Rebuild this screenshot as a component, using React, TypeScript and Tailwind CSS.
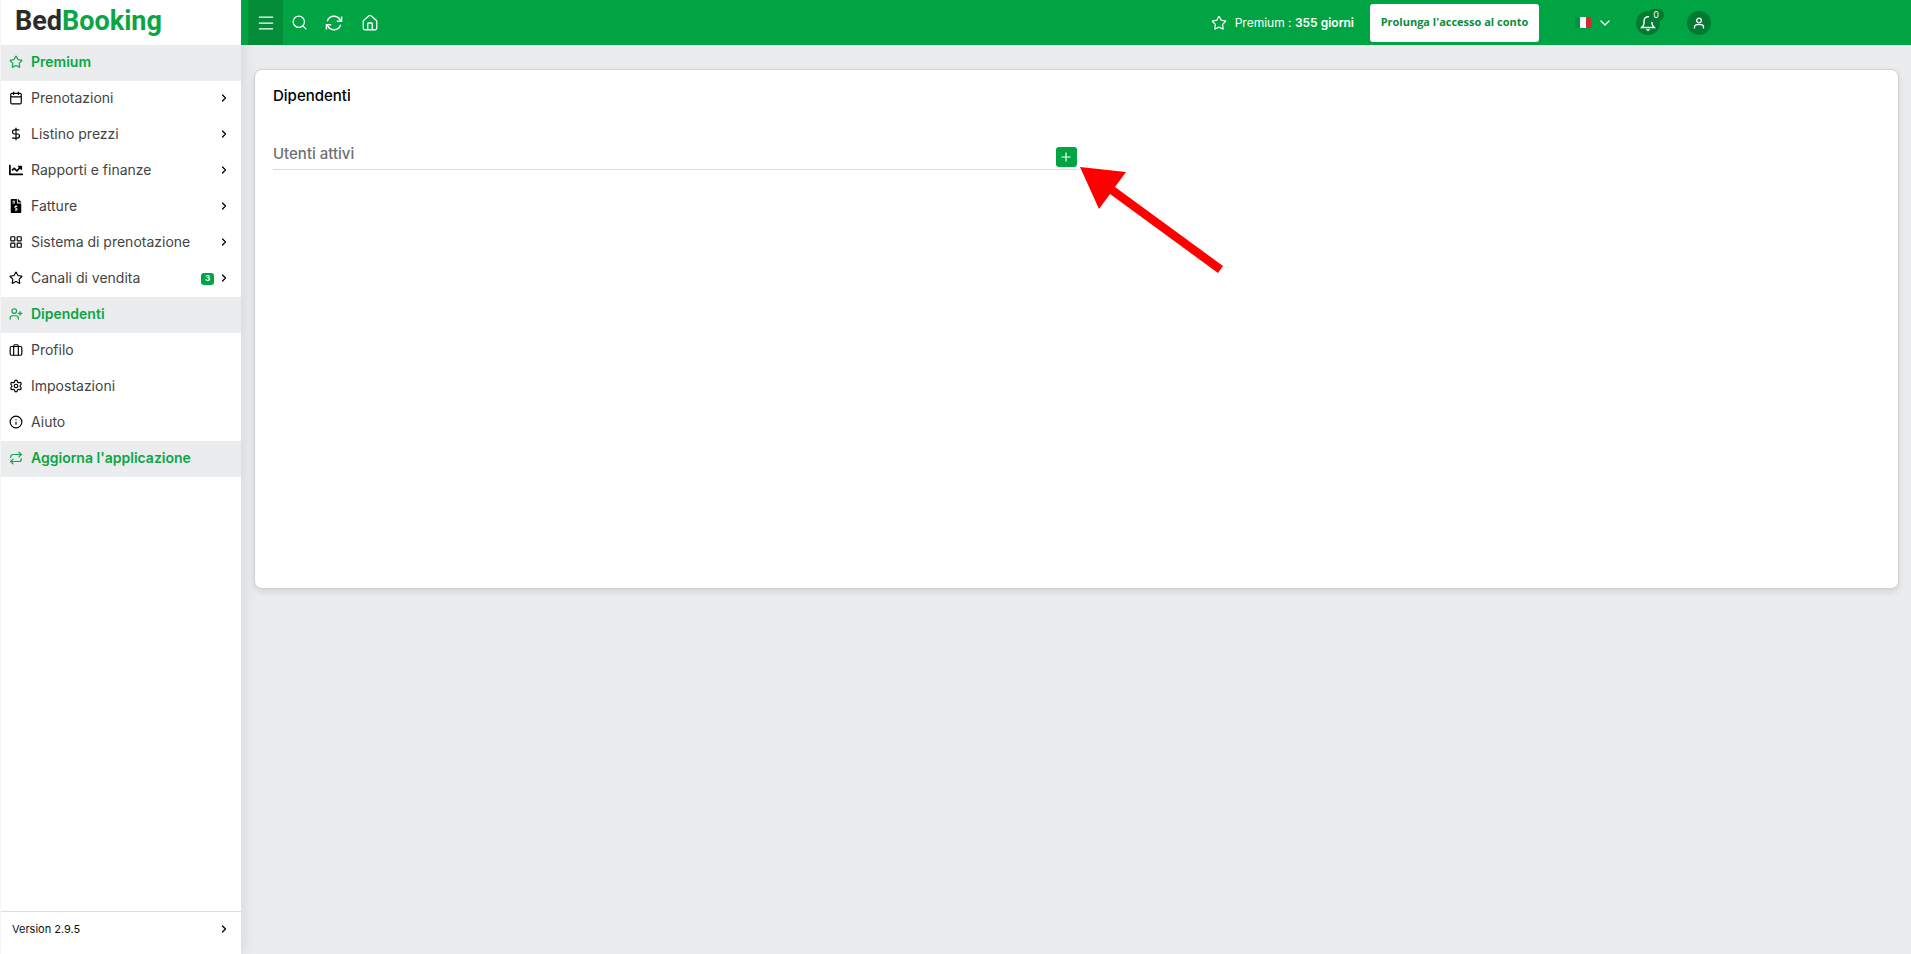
import type { ReactNode } from "react";
import {
  Calendar,
  ChevronDown,
  ChevronRight,
  DollarSign,
  House,
  Info,
  LayoutGrid,
  Menu,
  Plus,
  Repeat,
  Search,
  Settings,
  Star,
  UserPlus,
} from "lucide-react";
import { FaChartLine, FaFileInvoiceDollar } from "react-icons/fa";

type Item = { label: string; icon: ReactNode; active?: boolean; arrow?: boolean; badge?: string };

function Suitcase() {
  return (
    <svg viewBox="0 0 24 24" className="size-3.5" fill="none" stroke="currentColor" strokeWidth="2">
      <rect x="2" y="6" width="20" height="15" rx="2.5" />
      <path d="M8 21V5a2 2 0 0 1 2-2h4a2 2 0 0 1 2 2v16" />
    </svg>
  );
}

function Refresh() {
  return (
    <svg viewBox="0 0 18 16" className="h-4 w-[18px]" fill="none" stroke="currentColor" strokeWidth="1.4">
      <path d="M2.3 6.2A7 7 0 0 1 15 4.6L16.4 6" />
      <path d="M16.6 1.4v4.8h-4.8" />
      <path d="M15.7 9.8A7 7 0 0 1 3 11.4L1.6 10" />
      <path d="M1.4 14.6V9.8h4.8" />
    </svg>
  );
}

function BellIcon() {
  return (
    <svg viewBox="0 0 16 18" className="h-[18px] w-4" fill="none" stroke="currentColor" strokeWidth="1.4">
      <path d="M9 2.8C5.800 2.200 4 4.400 4 7v2.600c0 1.600-1 2.300-2.400 3.900h12.800c-1.400-1.600-2.400-2.300-2.400-3.900V8" />
      <path d="M6.200 15.500h3.600L8 17z" fill="currentColor" strokeWidth="0.500" />
    </svg>
  );
}

function UserIcon() {
  return (
    <svg viewBox="0 0 12 12" className="size-3" fill="none" stroke="currentColor" strokeWidth="1.300">
      <circle cx="6" cy="3.500" r="2.300" />
      <path d="M1.500 11.500V10a2.300 2.300 0 0 1 2.300-2.300h4.400a2.300 2.300 0 0 1 2.300 2.300v1.500" />
    </svg>
  );
}

const items: Item[] = [
  { label: "Premium", icon: <Star className="size-3.5" />, active: true },
  { label: "Prenotazioni", icon: <Calendar className="size-3.5" />, arrow: true },
  { label: "Listino prezzi", icon: <DollarSign className="size-3.5" />, arrow: true },
  { label: "Rapporti e finanze", icon: <FaChartLine className="size-3.5" />, arrow: true },
  { label: "Fatture", icon: <FaFileInvoiceDollar className="size-3.5" />, arrow: true },
  { label: "Sistema di prenotazione", icon: <LayoutGrid className="size-3.5" />, arrow: true },
  { label: "Canali di vendita", icon: <Star className="size-3.5" />, arrow: true, badge: "3" },
  { label: "Dipendenti", icon: <UserPlus className="size-3.5" />, active: true },
  { label: "Profilo", icon: <Suitcase /> },
  { label: "Impostazioni", icon: <Settings className="size-3.5" /> },
  { label: "Aiuto", icon: <Info className="size-3.5" /> },
  { label: "Aggiorna l'applicazione", icon: <Repeat className="size-3.5" />, active: true },
];

function SidebarItem({ item }: { item: Item }) {
  return (
    <li>
      <a
        href="#"
        className={
          item.active
            ? "flex h-9 items-center gap-2 bg-[#ebecee] pr-[11px] pb-0.5 pl-2 font-semibold text-[#0aa645]"
            : "flex h-9 items-center gap-2 pr-[11px] pb-0.5 pl-2 text-[#444]"
        }
      >
        <span className={item.active ? "shrink-0" : "shrink-0 text-black"}>{item.icon}</span>
        <span className="flex-1 whitespace-nowrap">{item.label}</span>
        <span className="flex items-center gap-1">
          {item.badge && (
            <span className="mt-0.5 flex h-3 w-[13px] items-center justify-center rounded-[3px] bg-[#00a443] text-[8px] font-bold text-white">
              {item.badge}
            </span>
          )}
          {item.arrow && <ChevronRight className="size-3 text-black" strokeWidth={2.5} />}
        </span>
      </a>
    </li>
  );
}

function Sidebar() {
  return (
    <aside className="z-10 flex w-[241px] shrink-0 flex-col border-l border-[#f4f4f4] bg-white shadow-[0_0_16px_rgba(0,0,0,0.12)]">
      <a href="#" className="flex h-[45px] items-center pb-0.5 pl-[14px] font-[Roboto,sans-serif] text-[27px] font-bold text-[#2b2b2b]">
        Bed<span className="text-[#0aa645]">Booking</span>
      </a>
      <nav className="flex-1">
        <ul className="text-sm">
          {items.map((item) => (
            <SidebarItem key={item.label} item={item} />
          ))}
        </ul>
      </nav>
      <button className="flex h-[43px] items-center justify-between border-t border-[#dcddde] pr-[11px] pb-2 pl-[11px] text-[11px] text-[#111]">
        Version 2.9.5
        <ChevronRight className="size-3" strokeWidth={3} />
      </button>
    </aside>
  );
}

function Header() {
  return (
    <header className="z-20 flex h-[45px] shrink-0 items-center bg-[#00a443] pr-[200px] pl-[7px] text-white">
      <button aria-label="Menu" className="flex h-full w-[35px] items-center justify-center bg-[#038d38]">
        <Menu className="size-5" strokeWidth={1.5} />
      </button>
      <button aria-label="Cerca" className="flex w-[33px] items-center justify-center">
        <Search className="size-[17px]" strokeWidth={1.75} />
      </button>
      <button aria-label="Aggiorna" className="flex w-9 items-center justify-center">
        <Refresh />
      </button>
      <button aria-label="Home" className="flex w-9 items-center justify-center">
        <House className="size-[18px]" strokeWidth={1.75} />
      </button>
      <div className="ml-auto flex items-center">
        <Star className="mr-2 size-4" strokeWidth={1.75} />
        <span className="mr-4 text-xs whitespace-nowrap">
          Premium : <b className="font-semibold">355 giorni</b>
        </span>
        <button className="mr-9 h-[38px] w-[169px] rounded-[3px] bg-white font-['Open_Sans',sans-serif] text-[11px] font-bold whitespace-nowrap text-[#0b8c3c]">
          Prolunga l'accesso al conto
        </button>
        <button aria-label="Lingua: italiano" className="mr-[23px] flex items-center gap-1.5">
          <svg viewBox="0 0 16 11" className="h-[11px] w-4">
            <path fill="#009246" d="M0 0h5v11H0z" />
            <path fill="#fff" d="M5 0h6v11H5z" />
            <path fill="#ce2b37" d="M11 0h5v11h-5z" />
          </svg>
          <ChevronDown className="size-4" strokeWidth={2} />
        </button>
        <button aria-label="Notifiche" className="relative mr-[27px] flex size-6 items-center justify-center rounded-full bg-[#037a32]">
          <span className="absolute -top-0.5 left-3 h-3 w-4 rounded-full bg-[#037a32]" />
          <span className="relative">
            <BellIcon />
          </span>
          <span className="absolute -top-0.5 left-3 flex h-3 w-4 items-center justify-center text-[9px]">0</span>
        </button>
        <button aria-label="Profilo utente" className="flex size-6 items-center justify-center rounded-full bg-[#037a32]">
          <UserIcon />
        </button>
      </div>
    </header>
  );
}

export default function App() {
  return (
    <div className="flex min-h-screen bg-[#ebecee] font-['Inter',sans-serif]">
      <Sidebar />
      <div className="flex min-w-0 flex-1 flex-col">
        <Header />
        <main className="pt-6 pr-3 pl-[13px]">
          <section className="relative min-h-[520px] rounded-lg border border-[#cfd1d4] bg-white px-[18px] pt-4 shadow-[0_3px_6px_rgba(0,0,0,0.1)]">
            <h1 className="text-[15px] leading-5 font-medium text-black">Dipendenti</h1>
            <div className="mt-10 flex h-6 w-1/2 items-end justify-between border-b border-[#d9dadc] pb-0.5">
              <h2 className="self-start text-[15px] leading-4 font-medium text-[#6f7072]">Utenti attivi</h2>
              <button aria-label="Aggiungi utente" className="flex h-5 w-[21px] items-center justify-center rounded-[3px] bg-[#00a443] text-white">
                <Plus className="size-3.5" strokeWidth={2} />
              </button>
            </div>
            <svg viewBox="0 0 144 107" className="absolute top-[97px] left-1/2 ml-[3px] h-[107px] w-36" aria-hidden="true">
              <path fill="#f00" d="M0 0 46 5 35 20 143 99 138 106 30 27 19 42z" />
            </svg>
          </section>
        </main>
      </div>
    </div>
  );
}
